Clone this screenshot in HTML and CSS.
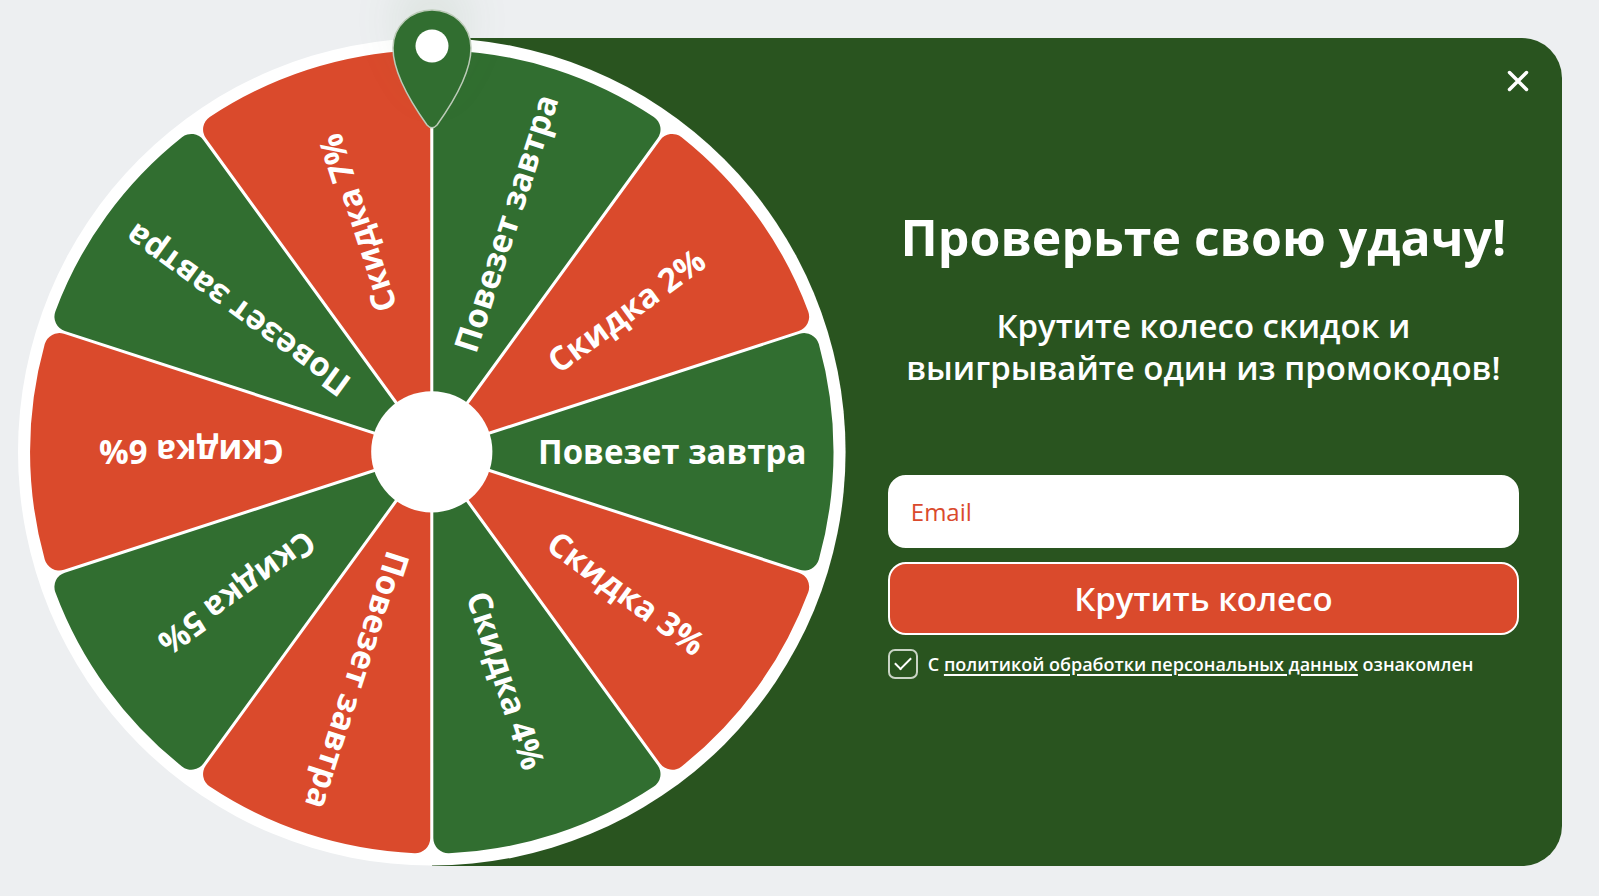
FILE: index.html
```html
<!DOCTYPE html>
<html lang="ru">
<head>
<meta charset="utf-8">
<meta name="viewport" content="width=device-width, initial-scale=1">
<title>Колесо скидок</title>
<link rel="stylesheet" href="styles.css">
</head>
<body>
<main class="popup">
  <div class="wheel">
    <svg class="wheel-disc" viewBox="-413 -413 826 826">
      <defs>
        <path id="sector" d="M4.9 0L367.2-117.7A15 15 0 0 1 386.3-107.5A401 401 0 0 1 386.3 107.5A15 15 0 0 1 367.2 117.7Z"/>
      </defs>
      <circle class="rim" r="413"/>
      <g transform="rotate(-72)"><use class="sector-green" href="#sector"/><text class="prize" x="240" y="12">Повезет завтра</text></g>
      <g transform="rotate(-36)"><use class="sector-red" href="#sector"/><text class="prize" x="240" y="12">Скидка 2%</text></g>
      <g><use class="sector-green" href="#sector"/><text class="prize" x="240" y="12">Повезет завтра</text></g>
      <g transform="rotate(36)"><use class="sector-red" href="#sector"/><text class="prize" x="240" y="12">Скидка 3%</text></g>
      <g transform="rotate(72)"><use class="sector-green" href="#sector"/><text class="prize" x="240" y="12">Скидка 4%</text></g>
      <g transform="rotate(108)"><use class="sector-red" href="#sector"/><text class="prize" x="240" y="12">Повезет завтра</text></g>
      <g transform="rotate(144)"><use class="sector-green" href="#sector"/><text class="prize" x="240" y="12">Скидка 5%</text></g>
      <g transform="rotate(180)"><use class="sector-red" href="#sector"/><text class="prize" x="240" y="12">Скидка 6%</text></g>
      <g transform="rotate(216)"><use class="sector-green" href="#sector"/><text class="prize" x="240" y="12">Повезет завтра</text></g>
      <g transform="rotate(252)"><use class="sector-red" href="#sector"/><text class="prize" x="240" y="12">Скидка 7%</text></g>
      <circle class="rim" r="60.5"/>
    </svg>
    <svg class="pointer" viewBox="0 0 80 120" aria-hidden="true">
      <path class="pointer-body" d="M40 1C61 1 79 17 79 39C79 65 60 95 45 116Q40 121.500 35 116C20 95 1 65 1 39C1 17 19 1 40 1Z"/>
      <circle class="pointer-eye" cx="40" cy="37" r="16.500"/>
    </svg>
  </div>
  <section class="panel">
    <button class="close" type="button" aria-label="Закрыть">
      <svg class="close-icon" viewBox="0 0 24 24" aria-hidden="true"><path d="M3.500 3.500L20.500 20.500M20.500 3.500L3.500 20.500"/></svg>
    </button>
    <h1 class="title">Проверьте свою удачу!</h1>
    <p class="lead">Крутите колесо скидок и<br>выигрывайте один из промокодов!</p>
    <form class="form">
      <input class="email" type="email" placeholder="Email" aria-label="Email">
      <button class="spin" type="button">Крутить колесо</button>
      <div class="consent">
        <input class="check" id="consent" type="checkbox" checked>
        <label class="consent-text" for="consent">С <a class="policy" href="#policy">политикой обработки персональных данных</a> ознакомлен</label>
      </div>
    </form>
  </section>
</main>
</body>
</html>
```
FILE: styles.css
```css
* { box-sizing: border-box; }

body {
  margin: 0;
  min-height: 100vh;
  padding: 38px 37px 30px 18px;
  background: #edeff1;
  color: #fff;
  font-family: "Open Sans", "Noto Sans", sans-serif;
}

.popup { display: flex; }

.wheel {
  position: relative;
  z-index: 1;
  flex: none;
  width: 53.6%;
}
.wheel-disc { display: block; width: 100%; }
.rim { fill: #fff; }
.sector-green { fill: #316e30; }
.sector-red { fill: #da4a2c; }
.prize {
  fill: #fff;
  font-size: 33px;
  font-weight: 700;
  text-anchor: middle;
}

.pointer {
  position: absolute;
  top: -29px;
  left: 50%;
  width: 80px;
  margin-left: -40px;
  overflow: visible;
  filter: drop-shadow(0 -32px 20px rgba(49, 110, 48, 0.07));
}
.pointer-body { fill: #316e30; stroke: #bccbb8; stroke-width: 1.5; }
.pointer-eye { fill: #fff; }

.panel {
  position: relative;
  flex: 1;
  display: flex;
  flex-direction: column;
  justify-content: center;
  margin-left: -26.8%;
  padding: 0 43px 20px 456px;
  border-radius: 0 40px 40px 0;
  background: #29541f;
  text-align: center;
}

.close {
  position: absolute;
  top: 23px;
  right: 24px;
  display: grid;
  place-items: center;
  width: 40px;
  height: 40px;
  padding: 0;
  border: 0;
  background: none;
  cursor: pointer;
}
.close-icon { width: 24px; stroke: #fff; stroke-width: 3.5; stroke-linecap: round; }

.title {
  margin: 0 0 36px;
  font-size: 50px;
  line-height: 64px;
  font-weight: 700;
}
.lead {
  margin: 0 0 86px;
  font-size: 33px;
  line-height: 42px;
  font-weight: 600;
}

.form { display: flex; flex-direction: column; gap: 14px; }
.email, .spin {
  width: 100%;
  height: 73px;
  border: 2px solid #fff;
  border-radius: 18px;
  font-family: inherit;
}
.email {
  padding: 0 21px;
  background: #fff;
  color: #da4a2c;
  font-size: 24px;
  font-weight: 500;
}
.email::placeholder { color: #da4a2c; opacity: 1; }
.spin {
  background: #da4a2c;
  color: #fff;
  font-size: 33px;
  font-weight: 600;
  cursor: pointer;
}

.consent { display: flex; align-items: center; gap: 10px; text-align: left; }
.check {
  appearance: none;
  flex: none;
  display: grid;
  place-items: center;
  width: 30px;
  height: 30px;
  margin: 0;
  border: 2px solid #c9d4c5;
  border-radius: 7px;
}
.check:checked::before {
  content: "";
  width: 14px;
  height: 7px;
  margin-bottom: 5px;
  border: solid #fff;
  border-width: 0 0 2px 2px;
  transform: rotate(-45deg);
}
.consent-text { font-size: 18px; line-height: 30px; font-weight: 600; white-space: nowrap; }
.policy { color: inherit; text-decoration-thickness: 2px; text-underline-offset: 3px; }
```
